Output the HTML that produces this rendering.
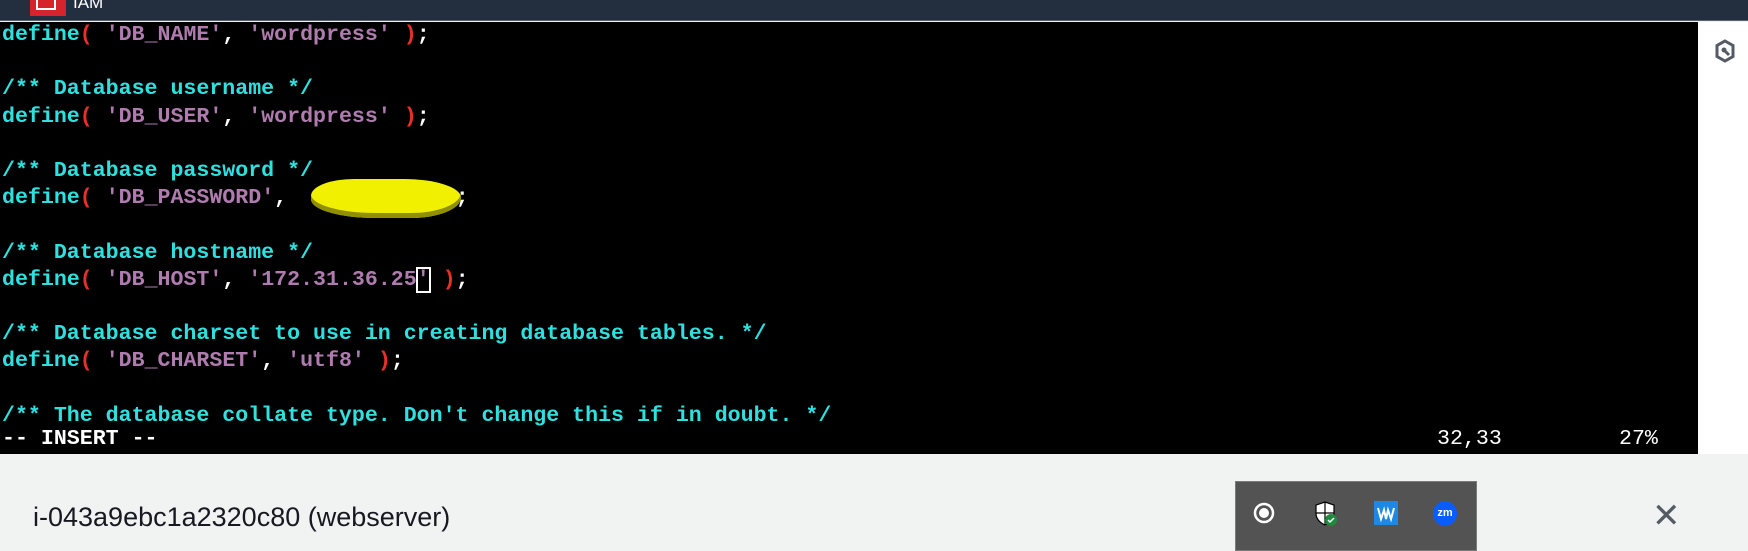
<!DOCTYPE html>
<html><head><meta charset="utf-8"><style>
*{margin:0;padding:0;box-sizing:border-box}
body{width:1748px;height:545px;overflow:hidden;background:#f1f3f3;position:relative;font-family:"Liberation Sans",sans-serif}
#top{position:absolute;left:0;top:0;width:1748px;height:21px;background:#232f3e;border-bottom:1px solid #5a6270}
#logo{position:absolute;left:30px;top:0;width:36px;height:16px;background:#d6242d}
#logo i{position:absolute;left:6px;top:-2px;width:20px;height:12px;border:2px solid #fff;border-top:none}
#iam{position:absolute;left:73px;top:-7px;color:#fff;font-size:17px}
#term{position:absolute;left:0;top:22px;width:1698px;height:432px;background:#000;font-family:"Liberation Mono",monospace;font-weight:bold;font-size:21.6px;color:#fff}
.r{position:absolute;left:2px;height:27.2px;line-height:27.2px;white-space:pre}
.c{color:#2ee0e0}.s{color:#b07cb0}.p{color:#e8302a}
#right{position:absolute;left:1698px;top:22px;width:50px;height:432px;background:#fff}
#blob{position:absolute;left:311px;top:179px;width:150px;height:39px;background:#f0f000;border-radius:30% 40% 35% 45%/45% 50% 55% 50%;box-shadow:0 -5px 0 #8f8f00 inset}
#bottom{position:absolute;left:0;top:454px;width:1748px;height:91px;background:#f1f3f3}
#inst{position:absolute;left:33px;top:502px;font-size:27px;color:#16191f}
#tray{position:absolute;left:1235px;top:481px;width:242px;height:70px;background:#525352;border:1px solid #7a7a7a}
#x{position:absolute;left:1652px;top:496px;font-size:34px;color:#545b64;font-weight:300}
</style></head><body>
<div id="top"><div id="logo"><i></i></div><div id="iam">IAM</div></div>
<div id="term">
<div class="r" style="top:0"><span class="c">define</span><span class="p">(</span> <span class="s">'DB_NAME'</span>, <span class="s">'wordpress'</span> <span class="p">)</span>;</div>
<div class="r" style="top:54.4px"><span class="c">/** Database username */</span></div>
<div class="r" style="top:81.6px"><span class="c">define</span><span class="p">(</span> <span class="s">'DB_USER'</span>, <span class="s">'wordpress'</span> <span class="p">)</span>;</div>
<div class="r" style="top:136px"><span class="c">/** Database password */</span></div>
<div class="r" style="top:163.2px"><span class="c">define</span><span class="p">(</span> <span class="s">'DB_PASSWORD'</span>,            <span class="p">)</span>;</div>
<div class="r" style="top:217.6px"><span class="c">/** Database hostname */</span></div>
<div class="r" style="top:244.8px"><span class="c">define</span><span class="p">(</span> <span class="s">'DB_HOST'</span>, <span class="s">'172.31.36.25<span style="outline:2px solid #fff;outline-offset:-1px">'</span></span> <span class="p">)</span>;</div>
<div class="r" style="top:299.2px"><span class="c">/** Database charset to use in creating database tables. */</span></div>
<div class="r" style="top:326.4px"><span class="c">define</span><span class="p">(</span> <span class="s">'DB_CHARSET'</span>, <span class="s">'utf8'</span> <span class="p">)</span>;</div>
<div class="r" style="top:380.8px"><span class="c">/** The database collate type. Don't change this if in doubt. */</span></div>
<div class="r" style="top:404px">-- INSERT --</div>
<div class="r" style="top:404px;left:1437px;font-weight:normal">32,33</div>
<div class="r" style="top:404px;left:1619px;font-weight:normal">27%</div>
</div>
<div id="blob"></div>
<div id="right"><svg style="position:absolute;left:16px;top:17px" width="22" height="24" viewBox="0 0 22 24"><path d="M11 2 L19 6.5 L19 17.5 L11 22 L3 17.5 L3 6.5 Z" fill="none" stroke="#545b64" stroke-width="3"/><circle cx="10" cy="11" r="2.5" fill="#545b64"/><path d="M11 12 L15 16" stroke="#545b64" stroke-width="3"/></svg></div>
<div id="bottom"></div>
<div id="inst">i-043a9ebc1a2320c80 (webserver)</div>
<div id="tray">
<svg style="position:absolute;left:17px;top:20px" width="22" height="22"><circle cx="11" cy="11" r="9" fill="none" stroke="#fff" stroke-width="2.5"/><circle cx="11" cy="11" r="5" fill="#fff"/></svg>
<svg style="position:absolute;left:78px;top:19px" width="24" height="26"><path d="M11 1 L20 4 L20 12 Q20 20 11 24 Q2 20 2 12 L2 4 Z" fill="#fff" stroke="#000" stroke-width="1.2"/><path d="M11 1 V24 M2 12 H20" stroke="#000" stroke-width="1.2"/><circle cx="17" cy="19" r="6" fill="#1e8b3c"/><path d="M14 19 l2 2 l4 -4" stroke="#fff" stroke-width="1.5" fill="none"/></svg>
<div style="position:absolute;left:138px;top:19px;width:24px;height:24px;background:#1e88e5"><svg width="24" height="24"><path d="M4 7 L7 18 L10 9 L12 18 L14 9 L17 18 L20 7" stroke="#fff" stroke-width="2" fill="none"/></svg></div>
<div style="position:absolute;left:197px;top:19px;width:24px;height:25px;background:#0b5cff;border-radius:50%;color:#fff;font-size:11px;font-weight:bold;text-align:center;line-height:25px">zm</div>
</div>
<div id="x">✕</div>
</body></html>
